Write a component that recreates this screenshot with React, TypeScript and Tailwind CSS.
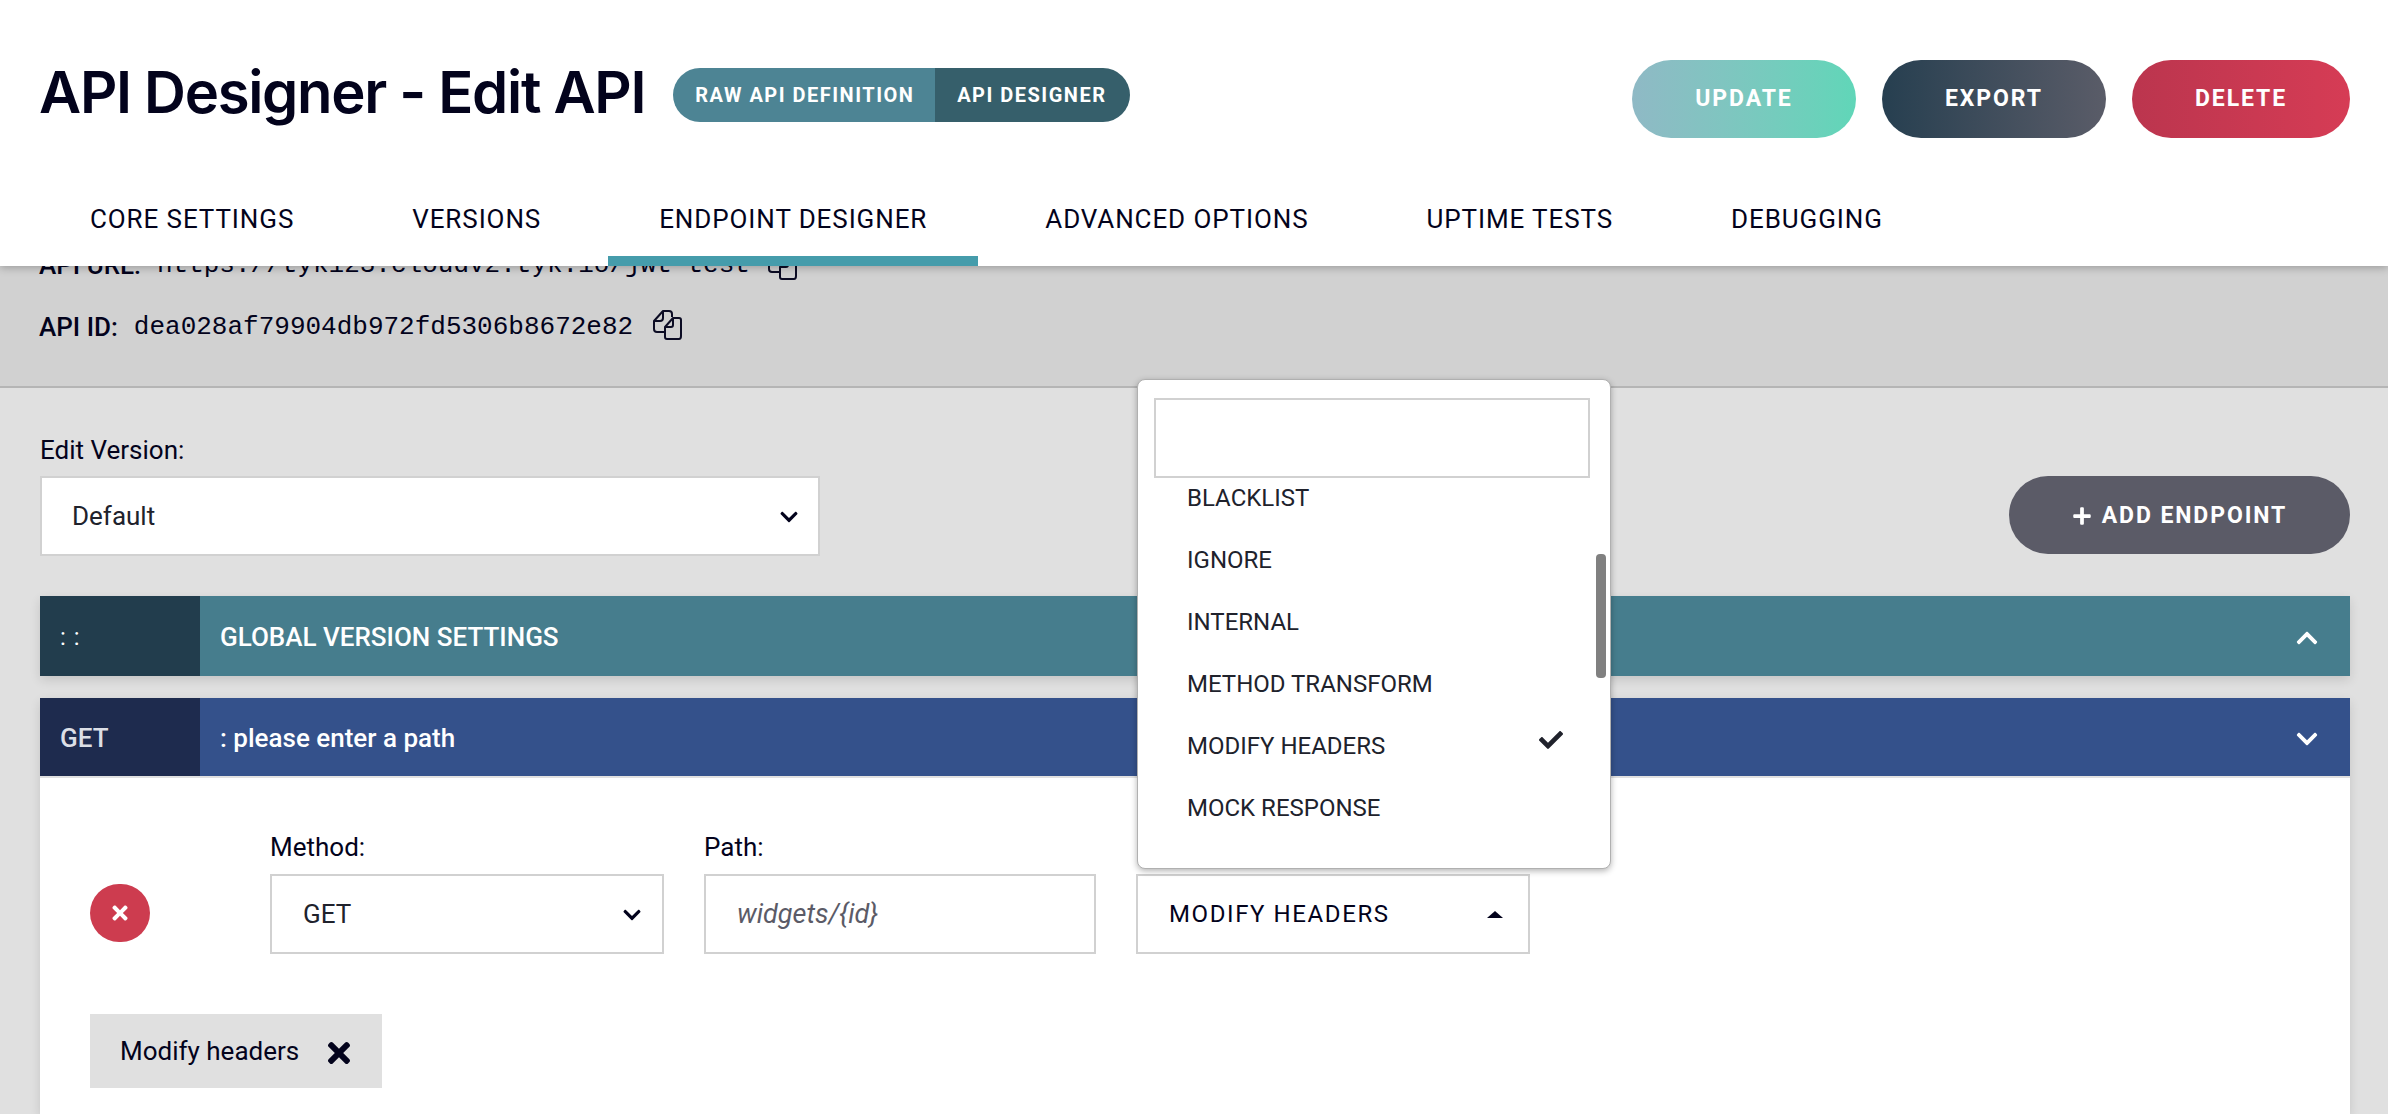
import { FaCheck, FaChevronDown, FaChevronUp, FaPlus, FaTimes } from 'react-icons/fa'

const tabs = ['CORE SETTINGS', 'VERSIONS', 'ENDPOINT DESIGNER', 'ADVANCED OPTIONS', 'UPTIME TESTS', 'DEBUGGING']
const options = ['BLACKLIST', 'IGNORE', 'INTERNAL', 'METHOD TRANSFORM', 'MODIFY HEADERS', 'MOCK RESPONSE']

function CopyIcon() {
  return (
    <svg width="29" height="30" viewBox="0 0 29 30" fill="none" stroke="#0c0c24" strokeWidth="2" strokeLinejoin="round">
      <path d="M11 22H4Q1 22 1 19V11L10 1H16Q19 1 19 4V7" />
      <path d="M10 1V8Q10 11 7 11H1" />
      <path d="M20 8H26Q28 8 28 10V26Q28 29 26 29H14Q12 29 12 27V17Z" />
      <path d="M20 8V15Q20 17 18 17H12" />
    </svg>
  )
}

function Header() {
  return (
    <div className="relative z-10 bg-white shadow-[0_2px_8px_rgba(0,0,0,0.25)] h-[266px] flex flex-col">
      <div className="h-[190px] pl-[39px] pr-[38px] flex items-start">
        <h1 className="mt-[54px] text-[58px] leading-[76px] font-semibold text-[#03031c] font-['Inter',sans-serif] tracking-[-1.3px] whitespace-nowrap">
          API Designer - Edit API
        </h1>
        <div className="ml-[28px] mt-[68px] h-[54px] flex rounded-full overflow-hidden text-white text-[20px] font-bold tracking-[1.5px]">
          <div className="w-[262px] pl-[22px] bg-[#4d8494] flex items-center">RAW API DEFINITION</div>
          <div className="w-[195px] pl-[22px] bg-[#365f6b] flex items-center">API DESIGNER</div>
        </div>
        <div className="ml-auto mt-[60px] flex gap-[26px] text-white text-[23px] font-bold tracking-[1.9px]">
          <button className="w-[224px] h-[78px] pt-[1px] rounded-full bg-gradient-to-r from-[#8fb9c5] to-[#60d6b8]">UPDATE</button>
          <button className="w-[224px] h-[78px] pt-[1px] rounded-full bg-gradient-to-r from-[#263f50] to-[#5a5c68]">EXPORT</button>
          <button className="w-[218px] h-[78px] pt-[1px] rounded-full bg-gradient-to-r from-[#bb354e] to-[#d63c55]">DELETE</button>
        </div>
      </div>
      <div className="flex gap-4 pl-[39px] h-[76px] text-[26px] tracking-[0.9px] text-[#03031c]">
        {tabs.map(tab => (
          <div
            key={tab}
            className={`px-[51px] pt-[10px] border-b-[10px] ${tab === 'ENDPOINT DESIGNER' ? 'border-[#459cab]' : 'border-transparent'}`}
          >
            {tab}
          </div>
        ))}
      </div>
    </div>
  )
}

function ApiInfo() {
  return (
    <div className="h-[122px] bg-[#d1d1d1] border-b-2 border-[#b5b5b5] overflow-hidden pl-[39px] text-[26px] font-medium text-[#03031c]">
      <div className="-mt-[21px] h-[40px] flex items-center">
        <span>API URL:</span>
        <span className="ml-[16px] font-['Liberation_Mono',monospace] font-normal text-[26px]">https://tyk123.cloudv2.tyk.io/jwt-test</span>
        <span className="ml-[18px]"><CopyIcon /></span>
      </div>
      <div className="mt-[22px] h-[40px] flex items-center">
        <span>API ID:</span>
        <span className="ml-[16px] font-['Liberation_Mono',monospace] font-normal text-[26px]">dea028af79904db972fd5306b8672e82</span>
        <span className="ml-[20px] -mt-[4px]"><CopyIcon /></span>
      </div>
    </div>
  )
}

function EndpointRow() {
  return (
    <div className="bg-white mt-[2px] flex-1 pl-[50px] pt-[53px]">
      <div className="flex">
        <button className="mt-[53px] w-[60px] h-[58px] rounded-full bg-[#cd3c4f] text-white flex items-center justify-center">
          <FaTimes size={22} />
        </button>
        <div className="ml-[120px] w-[394px]">
          <div className="text-[26px] leading-[32px] text-[#03031c]">Method:</div>
          <div className="mt-[11px] h-[80px] pt-[1px] border-2 border-[#d1d1d1] pl-[31px] pr-[20px] flex items-center justify-between text-[26px] text-[#20222c]">
            GET
            <FaChevronDown size={20} className="text-[#03031c]" />
          </div>
        </div>
        <div className="ml-[40px] w-[392px]">
          <div className="text-[26px] leading-[32px] text-[#03031c]">Path:</div>
          <div className="mt-[11px] h-[80px] border-2 border-[#d1d1d1] pl-[31px] flex items-center text-[27px] italic text-[#5b5b67]">
            widgets/{'{id}'}
          </div>
        </div>
        <div className="ml-[40px] w-[394px] mt-[43px]">
          <div className="h-[80px] border-2 border-[#d1d1d1] pl-[31px] pr-[25px] flex items-center justify-between text-[24px] tracking-[1.6px] text-[#03031c]">
            MODIFY HEADERS
            <span className="w-0 h-0 border-x-[8px] border-x-transparent border-b-[7px] border-b-[#03031c]" />
          </div>
        </div>
      </div>
      <div className="mt-[60px] w-[292px] h-[74px] bg-[#e0e0e0] pl-[30px] flex items-center text-[26px] text-[#03031c]">
        Modify headers
        <FaTimes size={32} className="ml-[24px] mt-[3px]" />
      </div>
    </div>
  )
}

function OptionsMenu() {
  return (
    <div className="absolute left-[1137px] top-[379px] z-20 w-[474px] h-[490px] bg-white rounded-[8px] border border-[#b0b0b0] shadow-[0_2px_6px_rgba(0,0,0,0.3)] overflow-hidden">
      <div className="ml-[16px] mr-[20px] mt-[18px] h-[80px] border-2 border-[#d1d1d1]" />
      <div className="pl-[49px] pr-[47px]">
        {options.map(option => (
          <div key={option} className="h-[62px] flex items-center justify-between text-[24px] text-[#20222c] first:-mt-[11px]">
            {option}
            {option === 'MODIFY HEADERS' && <FaCheck size={24} className="-mt-[13px]" />}
          </div>
        ))}
      </div>
      <div className="absolute right-[4px] top-[174px] w-[10px] h-[124px] rounded-[4px] bg-[#808080]" />
    </div>
  )
}

export default function App() {
  return (
    <div className="relative h-[1114px] w-[2388px] overflow-hidden flex flex-col bg-[#e0e0e0] font-['Roboto',sans-serif]">
      <Header />
      <ApiInfo />
      <div className="flex-1 flex flex-col px-[40px] pr-[38px] min-h-0">
        <div className="flex justify-between h-[208px]">
          <div>
            <div className="mt-[46px] text-[26px] leading-[32px] text-[#03031c]">Edit Version:</div>
            <div className="mt-[10px] w-[780px] h-[80px] pt-[1px] bg-white border-2 border-[#d1d1d1] pl-[30px] pr-[19px] flex items-center justify-between text-[26px] text-[#20222c]">
              Default
              <FaChevronDown size={20} className="text-[#03031c]" />
            </div>
          </div>
          <button className="mt-[88px] w-[341px] h-[78px] pt-[2px] rounded-full bg-[#5b5b67] text-white text-[23px] font-bold tracking-[1.9px] flex items-center justify-center gap-[10px]">
            <FaPlus size={20} />
            ADD ENDPOINT
          </button>
        </div>
        <div className="h-[80px] flex text-white shadow-[0_4px_10px_rgba(0,0,0,0.12)]">
          <div className="w-[160px] bg-[#223d4d] pl-[20px] pt-[2px] flex items-center text-[24px] tracking-[1px]">: :</div>
          <div className="flex-1 bg-[#467d8d] pl-[20px] pr-[31px] pt-[3px] flex items-center justify-between text-[26px] font-medium">
            GLOBAL VERSION SETTINGS
            <FaChevronUp size={24} />
          </div>
        </div>
        <div className="flex-1 mt-[22px] flex flex-col min-h-0 shadow-[0_4px_10px_rgba(0,0,0,0.12)]">
          <div className="h-[78px] flex text-white">
            <div className="w-[160px] bg-[#1e2b4e] pl-[20px] pt-[3px] flex items-center text-[26px] font-medium text-[#dcdfe6]">GET</div>
            <div className="flex-1 bg-[#34518b] pl-[20px] pr-[31px] pt-[3px] flex items-center justify-between text-[26px] font-medium">
              : please enter a path
              <FaChevronDown size={24} />
            </div>
          </div>
          <EndpointRow />
        </div>
      </div>
      <OptionsMenu />
    </div>
  )
}
